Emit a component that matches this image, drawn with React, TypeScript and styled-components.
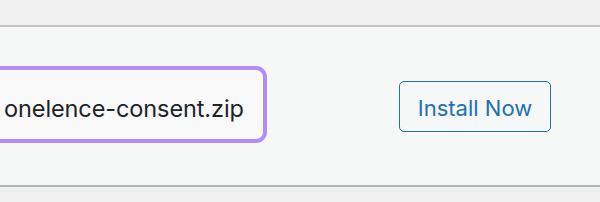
import styled, { createGlobalStyle } from 'styled-components';

const GlobalStyle = createGlobalStyle`
  html, body {
    margin: 0;
    padding: 0;
    background: #f0f0f0;
  }
  body {
    font-family: Inter, "Noto Sans", "Liberation Sans", sans-serif;
    -webkit-font-smoothing: antialiased;
  }
`;

const Page = styled.div`
  width: 600px;
  height: 202px;
  overflow: hidden;
  padding-top: 25px;
  box-sizing: border-box;
`;

const Panel = styled.section`
  height: 162px;
  box-sizing: border-box;
  background: #f6f7f7;
  border-top: 2px solid #c3c4c7;
  border-bottom: 2px solid #b4b6ba;
  display: flex;
  align-items: center;
  justify-content: space-between;
  padding: 0 49px 0 0;
`;

const FileBox = styled.div`
  margin: -4px 0 0 -12px;
  width: 279px;
  height: 77px;
  box-sizing: border-box;
  border: 4px solid #b48cf9;
  border-radius: 11px;
  background: #f9f9f9;
  display: flex;
  align-items: center;
  padding: 8px 0 0 12px;
  font-size: 23.5px;
  letter-spacing: -0.1px;
  color: #1d2327;
  white-space: nowrap;
`;

const InstallButton = styled.button`
  width: 152px;
  height: 51px;
  box-sizing: border-box;
  border: 1.6px solid #2271b1;
  border-radius: 5px;
  background: #f6f7f7;
  color: #2271b1;
  font-family: inherit;
  font-size: 22px;
  padding: 3px 0 0;
  margin-top: 1px;
  cursor: pointer;
`;

const App = () => (
  <>
    <GlobalStyle />
    <Page>
      <Panel>
        <FileBox>onelence-consent.zip</FileBox>
        <InstallButton>Install Now</InstallButton>
      </Panel>
    </Page>
  </>
);

export default App;
